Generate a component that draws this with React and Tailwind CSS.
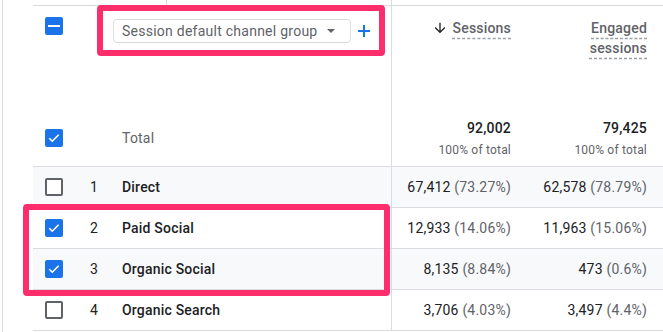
import React from "react";

const Checked = () => (
  <div className="w-[18px] h-[18px] rounded-[2px] bg-[#1a73e8] flex items-center justify-center">
    <svg width="14" height="14" viewBox="0 0 24 24">
      <path d="M4 12.5l5 5L20 6.5" fill="none" stroke="white" strokeWidth="2.8" />
    </svg>
  </div>
);

const Unchecked = () => (
  <div className="w-[18px] h-[18px] rounded-[2px] border-2 border-[#5f6368] bg-white" />
);

const Indeterminate = () => (
  <div className="w-[18px] h-[18px] rounded-[2px] bg-[#1a73e8] flex items-center justify-center">
    <div className="w-[12px] h-[2px] bg-white" />
  </div>
);

const rows = [
  { n: 1, name: "Direct", s: "67,412", sp: "(73.27%)", e: "62,578", ep: "(78.79%)", gray: true, checked: false },
  { n: 2, name: "Paid Social", s: "12,933", sp: "(14.06%)", e: "11,963", ep: "(15.06%)", gray: false, checked: true },
  { n: 3, name: "Organic Social", s: "8,135", sp: "(8.84%)", e: "473", ep: "(0.6%)", gray: true, checked: true },
  { n: 4, name: "Organic Search", s: "3,706", sp: "(4.03%)", e: "3,497", ep: "(4.4%)", gray: false, checked: false },
];

export default function App() {
  return (
    <div className="relative w-[663px] h-[332px] overflow-hidden bg-white flex font-['Roboto',sans-serif] text-[14px] tracking-[0.2px] text-[#202124]">
      <div className="w-[2px]" />
      <div className="w-px bg-[#dadce0]" />
      <div className="w-[30px]" />
      <div className="flex-1 flex flex-col">
        {/* top strip */}
        <div className="h-[5px] flex">
          <div className="w-[133px]" />
          <div className="w-px bg-[#dadce0]" />
          <div className="w-[224px]" />
          <div className="w-px bg-[#dadce0]" />
        </div>
        {/* header */}
        <div className="flex h-[105px] border-t border-[#dadce0]">
          <div className="w-[44px] pl-3 pt-[11px]">
            <Indeterminate />
          </div>
          <div className="w-[315px] border-r border-[#dadce0] pt-[13px] pl-[36px] flex items-start gap-[6px]">
            <div className="w-[238px] h-[24px] border border-[#dadce0] rounded-[4px] flex items-center pl-[8px] pr-[15px] justify-between">
              <span className="text-[14px] tracking-[0.25px] text-[#5f6368] leading-5">Session default channel group</span>
              <svg width="8" height="4" viewBox="0 0 8 4">
                <path d="M0 0h8L4 4z" fill="#5f6368" />
              </svg>
            </div>
            <svg width="14" height="14" viewBox="0 0 14 14" className="mt-[5px]">
              <path d="M7 1v12M1 7h12" stroke="#1a73e8" strokeWidth="2" fill="none" />
            </svg>
          </div>
          <div className="w-[132px] pr-[13px] pt-3 flex justify-end items-start">
            <div className="flex items-center gap-[5px] leading-5">
              <svg width="16" height="16" viewBox="0 0 24 24">
                <path d="M20 12l-1.41-1.41L13 16.17V4h-2v12.17l-5.58-5.59L4 12l8 8 8-8z" fill="#202124" />
              </svg>
              <span className="font-medium text-[#5f6368] underline decoration-dashed decoration-[#9aa0a6] underline-offset-[5px]">Sessions</span>
            </div>
          </div>
          <div className="flex-1 pr-[16px] pt-3 text-right leading-5">
            <span className="font-medium text-[#5f6368] underline decoration-dashed decoration-[#9aa0a6] underline-offset-[5px]">
              Engaged<br />sessions
            </span>
          </div>
        </div>
        {/* total */}
        <div className="flex h-[57px] border-b border-[#dadce0] items-center">
          <div className="w-[44px] pl-3">
            <Checked />
          </div>
          <div className="w-[34px]" />
          <div className="w-[281px] h-full border-r border-[#dadce0] flex items-center pl-[11px] text-[#5f6368]">Total</div>
          <div className="w-[132px] pr-[13px] text-right">
            <div className="font-medium leading-5">92,002</div>
            <div className="text-[12px] leading-4 mt-1 text-[#5f6368]">100% of total</div>
          </div>
          <div className="flex-1 pr-[16px] text-right">
            <div className="font-medium leading-5">79,425</div>
            <div className="text-[12px] leading-4 mt-1 text-[#5f6368]">100% of total</div>
          </div>
        </div>
        {rows.map((r) => (
          <div
            key={r.n}
            className={`flex h-[41px] border-b border-[#dadce0] items-center ${r.gray ? "bg-[#f8f9fa]" : "bg-white"}`}
          >
            <div className="w-[44px] pl-3">{r.checked ? <Checked /> : <Unchecked />}</div>
            <div className="w-[34px] text-center">{r.n}</div>
            <div className="w-[281px] h-full border-r border-[#dadce0] flex items-center pl-[11px] font-medium">{r.name}</div>
            <div className="w-[132px] pr-[13px] text-right">
              {r.s} <span className="text-[#5f6368]">{r.sp}</span>
            </div>
            <div className="flex-1 pr-[16px] text-right">
              {r.e} <span className="text-[#5f6368]">{r.ep}</span>
            </div>
          </div>
        ))}
      </div>
      {/* annotations */}
      <div className="absolute left-[97px] top-[5px] w-[288px] h-[51px] border-[6px] border-[#fe2d6c] rounded-[4px]" />
      <div className="absolute left-[23px] top-[204px] w-[367px] h-[92px] border-[6px] border-[#fe2d6c] rounded-[4px]" />
    </div>
  );
}
